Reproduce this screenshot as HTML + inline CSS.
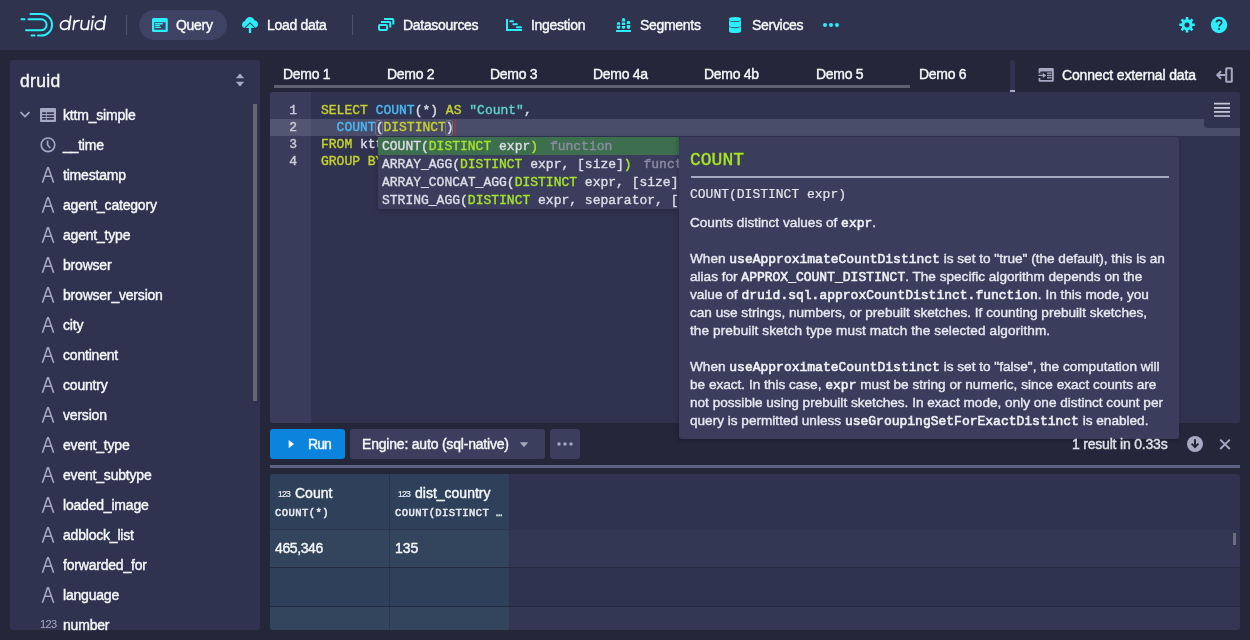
<!DOCTYPE html>
<html><head><meta charset="utf-8">
<style>
*{box-sizing:border-box;margin:0;padding:0}
html,body{width:1250px;height:640px;overflow:hidden;background:#242739;font-family:"Liberation Sans",sans-serif;color:#f5f8fa;position:relative;-webkit-text-stroke:0.4px currentColor}
div,svg,span.a{position:absolute}
.mono{font-family:"Liberation Mono",monospace}
#hdr{left:0;top:0;width:1250px;height:50px;background:#2f334e}
.nav{top:16px;height:18px;line-height:18px;font-size:14px;color:#f5f8fa;white-space:nowrap;letter-spacing:-0.3px}
.pill{left:139px;top:10px;width:88px;height:30px;border-radius:15px;background:#3e4363}
.sep{top:15px;width:1px;height:20px;background:#4f536d}
.cy{fill:#2ceefb}
#side{left:10px;top:60px;width:250px;height:570px;background:#30334f;border-radius:3px}
.ti{left:63px;font-size:14px;line-height:20px;height:20px;color:#f5f8fa;white-space:nowrap;letter-spacing:-0.2px}
.gi{fill:none;stroke:#a5aac2}
.tab{top:65.2px;font-size:14px;line-height:18px;color:#f5f8fa;white-space:nowrap;letter-spacing:-0.3px}
#editor{left:270px;top:92px;width:970px;height:331px;background:#30334f;border-radius:3px;overflow:hidden}
.code{font-family:"Liberation Mono",monospace;font-size:13px;line-height:17px;white-space:pre;color:#d8dde8}
.kw{color:#c5d130}
.fn{color:#4bb8f2}
.st{color:#5fd3c7}
.ac{font-family:"Liberation Mono",monospace;font-size:13px;line-height:18px;height:18px;white-space:pre;color:#dadde6;left:4px}
.acm{color:#a6e22e}
.acf{color:#8a8da3}
#doc{left:678.6px;top:137px;width:500px;height:302px;background:#3a3d5c;border-radius:3px;overflow:hidden;box-shadow:-1px 1px 4px rgba(0,0,0,0.25)}
.dl{left:11.4px;font-size:13.6px;line-height:18px;white-space:nowrap;color:#e4e9f0}
.dl b{font-family:"Liberation Mono",monospace;font-size:13px;font-weight:normal;-webkit-text-stroke:0.6px #eef0f4;color:#eef0f4}
.btn{top:429px;height:30px;border-radius:3px}
.th{font-size:14px;line-height:18px;white-space:nowrap;color:#f5f8fa}
</style></head><body>
<div id="root" style="left:0;top:0;width:1250px;height:640px;will-change:transform">
<div id="hdr"></div>
<div class="pill"></div>
<div class="sep" style="left:126px"></div>
<div class="sep" style="left:352px"></div>

<!-- logo -->
<svg style="left:15px;top:8px" width="45" height="34" viewBox="15 8 45 34" fill="none" stroke="#2ceefb" stroke-width="2" stroke-linecap="round">
<path d="M30.5 14 H41.3 A10.8 10.8 0 0 1 41.3 35.6 H38"/>
<path d="M31.5 35.6 H34.5"/>
<path d="M28.5 19.3 H41.1 A5.5 5.5 0 0 1 41.1 30.3 H26"/>
<path d="M21.5 19.3 H24.5"/>
</svg>
<svg style="left:56px;top:12px" width="56" height="24" viewBox="56 12 56 24" fill="none" stroke="#f5f8fa" stroke-width="1.7" stroke-linecap="round">
<g transform="translate(4.3 0) skewX(-8)">
<ellipse cx="64.2" cy="25" rx="4.5" ry="4.4"/>
<path d="M68.7 16 V29.4"/>
<path d="M73 20.6 V29.4 M73 24.8 Q73.6 20.6 77.8 20.6"/>
<path d="M80.4 20.6 V25.4 Q80.4 29.4 84 29.4 Q87.6 29.4 87.6 25.4 M87.6 20.6 V29.4"/>
<path d="M91.3 20.6 V29.4"/>
<circle cx="91.3" cy="16.9" r="0.5" stroke-width="1.9"/>
<ellipse cx="99" cy="25" rx="4.5" ry="4.4"/>
<path d="M103.5 16 V29.4"/>
</g>
</svg>

<!-- nav icons -->
<svg style="left:150px;top:16px" width="20" height="18" viewBox="150 16 20 18">
<path class="cy" fill-rule="evenodd" d="M153.5 18 h12.8 a1.5 1.5 0 0 1 1.5 1.5 v11 a1.5 1.5 0 0 1 -1.5 1.5 h-12.8 a1.5 1.5 0 0 1 -1.5 -1.5 v-11 a1.5 1.5 0 0 1 1.5 -1.5z M154.3 22.2 v7.5 h11.3 v-7.5z"/>
<rect class="cy" x="155" y="23" width="8" height="1.4" rx="0.7"/>
<rect class="cy" x="155" y="24.8" width="5" height="1.4" rx="0.7"/>
<rect class="cy" x="155" y="26.7" width="6" height="1.4" rx="0.7"/>
</svg>
<svg style="left:240px;top:15px" width="20" height="20" viewBox="240 15 20 20">
<path class="cy" d="M250 17 c2.2 0 3.9 1.4 4.4 3.3 c2 0.2 3.6 1.9 3.6 3.9 c0 1.7 -1 3 -2.5 3.6 l-5.5 -5.6 l-5.8 5.9 c-1.3 -0.6 -2.2 -1.9 -2.2 -3.4 c0 -1.8 1.3 -3.3 3 -3.7 c0.6 -2.2 2.6 -4 5 -4z"/>
<path class="cy" d="M250 23.5 l4.5 4.5 h-3.3 v5 h-2.4 v-5 h-3.3z"/>
</svg>
<svg style="left:376px;top:16px" width="20" height="18" viewBox="376 16 20 18" fill="none" stroke="#2ceefb" stroke-width="2">
<rect x="379" y="25" width="8" height="5" rx="1"/>
<path d="M381 22 h8.3 a1 1 0 0 1 1 1 v4.6"/>
<path d="M384 19 h8.3 a1 1 0 0 1 1 1 v4.6"/>
</svg>
<svg style="left:504px;top:16px" width="20" height="18" viewBox="504 16 20 18">
<path class="cy" d="M506 19 h2 v10 h14 v2 h-16z"/>
<rect class="cy" x="509.3" y="20.2" width="4.7" height="2" rx="1"/>
<rect class="cy" x="512.3" y="23.2" width="5.5" height="2" rx="1"/>
<rect class="cy" x="516" y="26.2" width="6" height="2" rx="1"/>
</svg>
<svg style="left:614px;top:16px" width="20" height="18" viewBox="614 16 20 18">
<rect class="cy" x="616" y="30" width="15" height="2" rx="0.5"/>
<path class="cy" d="M616.8 23.8 a1.7 1.7 0 0 1 3.4 0 v0.9 h-3.4z M616.8 25.8 h3.4 v1.5 a1.7 1.7 0 0 1 -3.4 0z"/>
<path class="cy" d="M621.8 19.7 a1.7 1.7 0 0 1 3.4 0 v1.8 h-3.4z M621.8 22.4 h3.4 v2.7 h-3.4z M621.8 26 h3.4 v1.3 a1.7 1.7 0 0 1 -3.4 0z"/>
<path class="cy" d="M626.8 22.5 a1.7 1.7 0 0 1 3.4 0 v1.5 h-3.4z M626.8 25 h3.4 v2.3 a1.7 1.7 0 0 1 -3.4 0z"/>
</svg>
<svg style="left:726px;top:15px" width="18" height="20" viewBox="726 15 18 20">
<path class="cy" d="M729 18.8 c0 -1.2 2.7 -1.9 6 -1.9 s6 0.7 6 1.9 v0.6 c0 1.2 -2.7 1.9 -6 1.9 s-6 -0.7 -6 -1.9z"/>
<path class="cy" d="M729 20.2 c1 1.2 3.5 1.9 6 1.9 s5 -0.7 6 -1.9 v5.3 c0 1.2 -2.7 1.9 -6 1.9 s-6 -0.7 -6 -1.9z"/>
<path class="cy" d="M729 26.3 c1 1.2 3.5 1.9 6 1.9 s5 -0.7 6 -1.9 v4.9 c0 1.2 -2.7 1.9 -6 1.9 s-6 -0.7 -6 -1.9z"/>
</svg>
<svg style="left:818px;top:18px" width="24" height="14" viewBox="818 18 24 14">
<circle class="cy" cx="825" cy="25" r="2"/><circle class="cy" cx="831" cy="25" r="2"/><circle class="cy" cx="837" cy="25" r="2"/>
</svg>
<!-- gear & help -->
<svg style="left:1177px;top:15px" width="20" height="20" viewBox="1177 15 20 20">
<g transform="translate(1187 25)">
<path class="cy" fill-rule="evenodd" d="M-1.3 -8 h2.6 v2.3 l1.6 0.7 l1.6 -1.6 l1.9 1.9 l-1.6 1.6 l0.7 1.6 h2.3 v2.6 h-2.3 l-0.7 1.6 l1.6 1.6 l-1.9 1.9 l-1.6 -1.6 l-1.6 0.7 v2.3 h-2.6 v-2.3 l-1.6 -0.7 l-1.6 1.6 l-1.9 -1.9 l1.6 -1.6 l-0.7 -1.6 h-2.3 v-2.6 h2.3 l0.7 -1.6 l-1.6 -1.6 l1.9 -1.9 l1.6 1.6 l1.6 -0.7z M0 -2.6 a2.6 2.6 0 1 0 0.01 0z"/>
</g>
</svg>
<svg style="left:1209px;top:15px" width="20" height="20" viewBox="1209 15 20 20">
<circle class="cy" cx="1219" cy="25" r="8.2"/>
<path d="M1216.4 22.6 c0 -1.6 1.2 -2.5 2.7 -2.5 c1.5 0 2.6 0.9 2.6 2.3 c0 1.9 -2.4 2 -2.6 4.2" fill="none" stroke="#2f334e" stroke-width="1.6"/>
<rect x="1218.2" y="28" width="1.7" height="1.8" fill="#2f334e"/>
</svg>

<div class="nav" style="left:176px">Query</div>
<div class="nav" style="left:267px">Load data</div>
<div class="nav" style="left:403px">Datasources</div>
<div class="nav" style="left:531px">Ingestion</div>
<div class="nav" style="left:640px">Segments</div>
<div class="nav" style="left:752px">Services</div>

<!-- SIDEBAR -->
<div id="side"></div>
<div style="left:20px;top:70.5px;font-size:17.5px;line-height:20px;color:#f5f8fa;letter-spacing:0.3px">druid</div>
<svg style="left:233px;top:71px" width="14" height="18" viewBox="233 71 14 18">
<path d="M240 73.5 l4.2 4.8 h-8.4z M240 86.5 l4.2 -4.8 h-8.4z" fill="#a5aac2"/>
</svg>
<div style="left:253px;top:104px;width:3.5px;height:297px;background:#66676f"></div>

<svg style="left:18px;top:108px" width="40" height="16" viewBox="18 108 40 16">
<path d="M20.6 112.2 l4.4 4.4 l4.4 -4.4" fill="none" stroke="#a5aac2" stroke-width="1.8"/>
<path fill="#a5aac2" fill-rule="evenodd" d="M41 108 h14 a1 1 0 0 1 1 1 v12 a1 1 0 0 1 -1 1 h-14 a1 1 0 0 1 -1 -1 v-12 a1 1 0 0 1 1 -1z M42.1 112.2 h3.8 v1.7 h-3.8z M46.8 112.2 h7.1 v1.7 h-7.1z M42.1 115.3 h3.8 v1.6 h-3.8z M46.8 115.3 h7.1 v1.6 h-7.1z M42.1 118.1 h3.8 v1.6 h-3.8z M46.8 118.1 h7.1 v1.6 h-7.1z"/>
</svg>
<div class="ti" style="top:105px">kttm_simple</div>
<svg style="left:38px;top:135px" width="20" height="20" viewBox="38 135 20 20">
<circle cx="48" cy="144.8" r="6.8" class="gi" stroke-width="1.6"/>
<path d="M47.6 140.5 v4.5 l2.6 3" class="gi" stroke-width="1.6"/>
</svg>
<div class="ti" style="top:135px">__time</div>

<svg style="left:40px;top:166px" width="16" height="18" viewBox="40 166 16 18"><path d="M42.4 182.8 L47.6 167.8 Q48 167 48.4 167.8 L53.6 182.8 M44.3 176.2 H51.7" class="gi" stroke-width="1.55" stroke-linejoin="round"/></svg>
<div class="ti" style="top:165px">timestamp</div>
<svg style="left:40px;top:196px" width="16" height="18" viewBox="40 196 16 18"><path d="M42.4 212.8 L47.6 197.8 Q48 197 48.4 197.8 L53.6 212.8 M44.3 206.2 H51.7" class="gi" stroke-width="1.55" stroke-linejoin="round"/></svg>
<div class="ti" style="top:195px">agent_category</div>
<svg style="left:40px;top:226px" width="16" height="18" viewBox="40 226 16 18"><path d="M42.4 242.8 L47.6 227.8 Q48 227 48.4 227.8 L53.6 242.8 M44.3 236.2 H51.7" class="gi" stroke-width="1.55" stroke-linejoin="round"/></svg>
<div class="ti" style="top:225px">agent_type</div>
<svg style="left:40px;top:256px" width="16" height="18" viewBox="40 256 16 18"><path d="M42.4 272.8 L47.6 257.8 Q48 257 48.4 257.8 L53.6 272.8 M44.3 266.2 H51.7" class="gi" stroke-width="1.55" stroke-linejoin="round"/></svg>
<div class="ti" style="top:255px">browser</div>
<svg style="left:40px;top:286px" width="16" height="18" viewBox="40 286 16 18"><path d="M42.4 302.8 L47.6 287.8 Q48 287 48.4 287.8 L53.6 302.8 M44.3 296.2 H51.7" class="gi" stroke-width="1.55" stroke-linejoin="round"/></svg>
<div class="ti" style="top:285px">browser_version</div>
<svg style="left:40px;top:316px" width="16" height="18" viewBox="40 316 16 18"><path d="M42.4 332.8 L47.6 317.8 Q48 317 48.4 317.8 L53.6 332.8 M44.3 326.2 H51.7" class="gi" stroke-width="1.55" stroke-linejoin="round"/></svg>
<div class="ti" style="top:315px">city</div>
<svg style="left:40px;top:346px" width="16" height="18" viewBox="40 346 16 18"><path d="M42.4 362.8 L47.6 347.8 Q48 347 48.4 347.8 L53.6 362.8 M44.3 356.2 H51.7" class="gi" stroke-width="1.55" stroke-linejoin="round"/></svg>
<div class="ti" style="top:345px">continent</div>
<svg style="left:40px;top:376px" width="16" height="18" viewBox="40 376 16 18"><path d="M42.4 392.8 L47.6 377.8 Q48 377 48.4 377.8 L53.6 392.8 M44.3 386.2 H51.7" class="gi" stroke-width="1.55" stroke-linejoin="round"/></svg>
<div class="ti" style="top:375px">country</div>
<svg style="left:40px;top:406px" width="16" height="18" viewBox="40 406 16 18"><path d="M42.4 422.8 L47.6 407.8 Q48 407 48.4 407.8 L53.6 422.8 M44.3 416.2 H51.7" class="gi" stroke-width="1.55" stroke-linejoin="round"/></svg>
<div class="ti" style="top:405px">version</div>
<svg style="left:40px;top:436px" width="16" height="18" viewBox="40 436 16 18"><path d="M42.4 452.8 L47.6 437.8 Q48 437 48.4 437.8 L53.6 452.8 M44.3 446.2 H51.7" class="gi" stroke-width="1.55" stroke-linejoin="round"/></svg>
<div class="ti" style="top:435px">event_type</div>
<svg style="left:40px;top:466px" width="16" height="18" viewBox="40 466 16 18"><path d="M42.4 482.8 L47.6 467.8 Q48 467 48.4 467.8 L53.6 482.8 M44.3 476.2 H51.7" class="gi" stroke-width="1.55" stroke-linejoin="round"/></svg>
<div class="ti" style="top:465px">event_subtype</div>
<svg style="left:40px;top:496px" width="16" height="18" viewBox="40 496 16 18"><path d="M42.4 512.8 L47.6 497.8 Q48 497 48.4 497.8 L53.6 512.8 M44.3 506.2 H51.7" class="gi" stroke-width="1.55" stroke-linejoin="round"/></svg>
<div class="ti" style="top:495px">loaded_image</div>
<svg style="left:40px;top:526px" width="16" height="18" viewBox="40 526 16 18"><path d="M42.4 542.8 L47.6 527.8 Q48 527 48.4 527.8 L53.6 542.8 M44.3 536.2 H51.7" class="gi" stroke-width="1.55" stroke-linejoin="round"/></svg>
<div class="ti" style="top:525px">adblock_list</div>
<svg style="left:40px;top:556px" width="16" height="18" viewBox="40 556 16 18"><path d="M42.4 572.8 L47.6 557.8 Q48 557 48.4 557.8 L53.6 572.8 M44.3 566.2 H51.7" class="gi" stroke-width="1.55" stroke-linejoin="round"/></svg>
<div class="ti" style="top:555px">forwarded_for</div>
<svg style="left:40px;top:586px" width="16" height="18" viewBox="40 586 16 18"><path d="M42.4 602.8 L47.6 587.8 Q48 587 48.4 587.8 L53.6 602.8 M44.3 596.2 H51.7" class="gi" stroke-width="1.55" stroke-linejoin="round"/></svg>
<div class="ti" style="top:585px">language</div>
<div style="left:40px;top:618px;font-size:11px;line-height:13px;color:#a5aac2;letter-spacing:-0.6px;-webkit-text-stroke:0">123</div>
<div class="ti" style="top:615px">number</div>

<!-- TABS -->
<div class="tab" style="left:283px">Demo 1</div>
<div class="tab" style="left:387px">Demo 2</div>
<div class="tab" style="left:490px">Demo 3</div>
<div class="tab" style="left:593px">Demo 4a</div>
<div class="tab" style="left:704px">Demo 4b</div>
<div class="tab" style="left:816px">Demo 5</div>
<div class="tab" style="left:919px">Demo 6</div>
<div style="left:274px;top:85px;width:636px;height:3.3px;background:#606170"></div>
<div style="left:1010px;top:60px;width:5px;height:32px;background:#30334f;border-radius:2px 2px 0 0"></div>
<div style="left:1010px;top:90px;width:5px;height:2px;background:#a5aac2"></div>
<svg style="left:1036px;top:66px" width="20" height="18" viewBox="1036 66 20 18">
<path fill="#a5aac2" fill-rule="evenodd" d="M1039.8 68 h12.8 a1.2 1.2 0 0 1 1.2 1.2 v11.3 a1.2 1.2 0 0 1 -1.2 1.2 h-12.8 a1.2 1.2 0 0 1 -1.2 -1.2 v-2.6 h1.8 v2 h11.6 v-8.4 h-11.6 v1.8 h-1.8 v-4.1 a1.2 1.2 0 0 1 1.2 -1.2z"/>
<path fill="#a5aac2" d="M1038.4 74.8 h4.4 v-2 l3.4 2.6 l-3.4 2.6 v-2 h-4.4z"/>
<rect fill="#a5aac2" x="1047" y="72.5" width="4.6" height="1.3"/>
<rect fill="#a5aac2" x="1047" y="74.8" width="4.6" height="1.3"/>
<rect fill="#a5aac2" x="1047" y="77.1" width="4.6" height="1.3"/>
</svg>
<div class="tab" style="left:1062px;top:66px;letter-spacing:-0.15px">Connect external data</div>
<svg style="left:1214px;top:65px" width="22" height="20" viewBox="1214 65 22 20" fill="none" stroke="#a5aac2" stroke-width="2">
<rect x="1226.2" y="68.2" width="5.6" height="13.6" rx="0.6"/>
<path d="M1225 75 h-7 M1221 71.3 l-3.7 3.7 l3.7 3.7"/>
</svg>

<!-- EDITOR -->
<div id="editor">
  <div style="left:0;top:0;width:41px;height:331px;background:#393c5a"></div>
  <div style="left:0;top:27px;width:970px;height:17px;background:#4a4d69"></div>
  <div style="left:0;top:27px;width:41px;height:17px;background:#535672"></div>
  <div style="left:934px;top:0;width:36px;height:36px;background:#30334f;border-radius:0 0 0 4px"></div>
  <svg style="left:943px;top:9px" width="18" height="18" viewBox="0 0 18 18"><path d="M1 2.7 h16 M1 6.8 h16 M1 10.9 h16 M1 15 h16" stroke="#c4c8d8" stroke-width="1.7"/></svg>
  <div class="code" style="left:0;top:10.4px;width:27px;text-align:right;color:#c8ccd8">1
2
3
4</div>
  <div class="code" style="left:51px;top:10.4px"><span class="kw">SELECT</span> <span class="fn">COUNT</span>(*) <span class="kw">AS</span> <span class="st">"Count"</span>,
  <span class="fn">COUNT</span>(<span class="kw">DISTINCT</span>)
<span class="kw">FROM</span> kttm_simple
<span class="kw">GROUP BY</span> 1</div>
  <div style="left:105px;top:27.5px;width:7.6px;height:16.5px;border:1px solid #6f728a;border-radius:3px"></div>
  <div style="left:175.2px;top:27.5px;width:7.6px;height:16.5px;border:1px solid #6f728a;border-radius:3px"></div>
  <div style="left:184px;top:27px;width:2px;height:17px;background:#80404c"></div>
</div>

<!-- AUTOCOMPLETE -->
<div style="left:378px;top:137px;width:301px;height:72px;background:#3a3d5c;overflow:hidden;box-shadow:0 2px 5px rgba(0,0,0,0.22)">
  <div style="left:0;top:0;width:301px;height:18px;background:#3d6e4d"></div>
  <div class="ac" style="top:1px">COUNT(<span class="acm">DISTINCT</span> expr<span class="acm">)</span> <span class="acf" style="margin-left:4px">function</span></div>
  <div class="ac" style="top:19px">ARRAY_AGG(<span class="acm">DISTINCT</span> expr, [size]<span class="acm">)</span> <span class="acf" style="margin-left:4px">function</span></div>
  <div class="ac" style="top:37px">ARRAY_CONCAT_AGG(<span class="acm">DISTINCT</span> expr, [size])</div>
  <div class="ac" style="top:55px">STRING_AGG(<span class="acm">DISTINCT</span> expr, separator, [size])</div>
</div>

<!-- DOC POPUP -->
<div id="doc">
  <div class="mono" style="left:11.4px;top:12px;font-size:18px;line-height:22px;color:#a8e61d">COUNT</div>
  <div style="left:12px;top:39px;width:478px;height:2px;background:#a5aac2"></div>
  <div class="mono" style="left:11.4px;top:49px;font-size:13px;line-height:18px;color:#e2e6ec;-webkit-text-stroke:0.2px #e2e6ec">COUNT(DISTINCT expr)</div>
  <div class="dl" style="top:77px">Counts distinct values of <b>expr</b>.</div>
  <div class="dl" style="top:113px">When <b>useApproximateCountDistinct</b> is set to "true" (the default), this is an</div>
  <div class="dl" style="top:131px">alias for <b>APPROX_COUNT_DISTINCT</b>. The specific algorithm depends on the</div>
  <div class="dl" style="top:149px">value of <b>druid.sql.approxCountDistinct.function</b>. In this mode, you</div>
  <div class="dl" style="top:167px">can use strings, numbers, or prebuilt sketches. If counting prebuilt sketches,</div>
  <div class="dl" style="top:185px;letter-spacing:0.1px">the prebuilt sketch type must match the selected algorithm.</div>
  <div class="dl" style="top:221px">When <b>useApproximateCountDistinct</b> is set to "false", the computation will</div>
  <div class="dl" style="top:239px">be exact. In this case, <b>expr</b> must be string or numeric, since exact counts are</div>
  <div class="dl" style="top:257px">not possible using prebuilt sketches. In exact mode, only one distinct count per</div>
  <div class="dl" style="top:275px">query is permitted unless <b>useGroupingSetForExactDistinct</b> is enabled.</div>
</div>

<!-- RUN BAR -->
<div class="btn" style="left:270px;width:75px;background:#0b84de"></div>
<svg style="left:286px;top:438px" width="10" height="12" viewBox="286 438 10 12"><path d="M288.7 439.9 l5.3 4.15 l-5.3 4.15z" fill="#fff"/></svg>
<div class="th" style="left:308px;top:435px;font-size:14px;letter-spacing:-0.9px">Run</div>
<div class="btn" style="left:350px;width:195px;background:#3b3e5c"></div>
<div class="th" style="left:362px;top:435px;letter-spacing:-0.2px">Engine: auto (sql-native)</div>
<svg style="left:518px;top:440px" width="12" height="10" viewBox="518 440 12 10"><path d="M519.8 442.2 h8.4 l-4.2 5z" fill="#a5aac2"/></svg>
<div class="btn" style="left:550px;width:30px;background:#3b3e5c"></div>
<svg style="left:553px;top:440px" width="24" height="8" viewBox="553 440 24 8"><circle cx="559" cy="444" r="1.7" fill="#a5aac2"/><circle cx="565" cy="444" r="1.7" fill="#a5aac2"/><circle cx="571" cy="444" r="1.7" fill="#a5aac2"/></svg>
<div class="th" style="left:1072px;top:435px;letter-spacing:-0.2px;color:#dde1e8">1 result in 0.33s</div>
<svg style="left:1185px;top:434px" width="20" height="20" viewBox="1185 434 20 20">
<circle cx="1195" cy="444" r="8" fill="#a5aac2"/>
<path d="M1195 439.3 v7.6 M1191.6 443.6 l3.4 3.4 l3.4 -3.4" fill="none" stroke="#242739" stroke-width="2"/>
</svg>
<svg style="left:1216px;top:436px" width="18" height="16" viewBox="1216 436 18 16"><path d="M1220.2 439.6 l9.6 9.4 M1229.8 439.6 l-9.6 9.4" stroke="#a5aac2" stroke-width="1.9"/></svg>
<div style="left:270px;top:465px;width:970px;height:3px;background:#5e6282"></div>

<!-- TABLE -->
<div style="left:270px;top:474px;width:970px;height:156px;background:#30334f;border-radius:3px;overflow:hidden">
  <div style="left:0;top:0;width:240px;height:156px;background:#2f405a"></div>
  <div style="left:119px;top:0;width:1px;height:156px;background:#283449"></div>
  <div style="left:239px;top:0;width:1px;height:156px;background:#283449"></div>
  <div style="left:0;top:55px;width:970px;height:1px;background:#2b3550"></div>
  <div style="left:0;top:93px;width:970px;height:1px;background:#252a40"></div>
  <div style="left:0;top:132px;width:970px;height:1px;background:#252a40"></div>
  <div style="left:0;top:56px;width:970px;height:37px;background:rgba(255,255,255,0.025)"></div>
  <div style="left:0;top:133px;width:970px;height:23px;background:rgba(255,255,255,0.025)"></div>
  <div style="left:962.5px;top:59px;width:3.5px;height:12px;background:#6b6e80"></div>
  <div style="left:8px;top:14.5px;font-size:8.6px;line-height:10px;color:#e8ebf0;letter-spacing:-0.8px;-webkit-text-stroke:0.2px #e8ebf0">123</div>
  <div class="th" style="left:25px;top:10px">Count</div>
  <div class="mono" style="left:5px;top:33px;font-size:10.6px;line-height:12px;color:#e8ebf0;-webkit-text-stroke:0.5px #e8ebf0;letter-spacing:0.4px">COUNT(*)</div>
  <div style="left:128px;top:14.5px;font-size:8.6px;line-height:10px;color:#e8ebf0;letter-spacing:-0.8px;-webkit-text-stroke:0.2px #e8ebf0">123</div>
  <div class="th" style="left:145px;top:10px">dist_country</div>
  <div class="mono" style="left:125px;top:33px;font-size:10.6px;line-height:12px;color:#e8ebf0;-webkit-text-stroke:0.5px #e8ebf0;letter-spacing:0.37px">COUNT(DISTINCT …</div>
  <div class="th" style="left:5px;top:65px;letter-spacing:-0.4px">465,346</div>
  <div class="th" style="left:125px;top:65px">135</div>
</div>
</div>
</body></html>
